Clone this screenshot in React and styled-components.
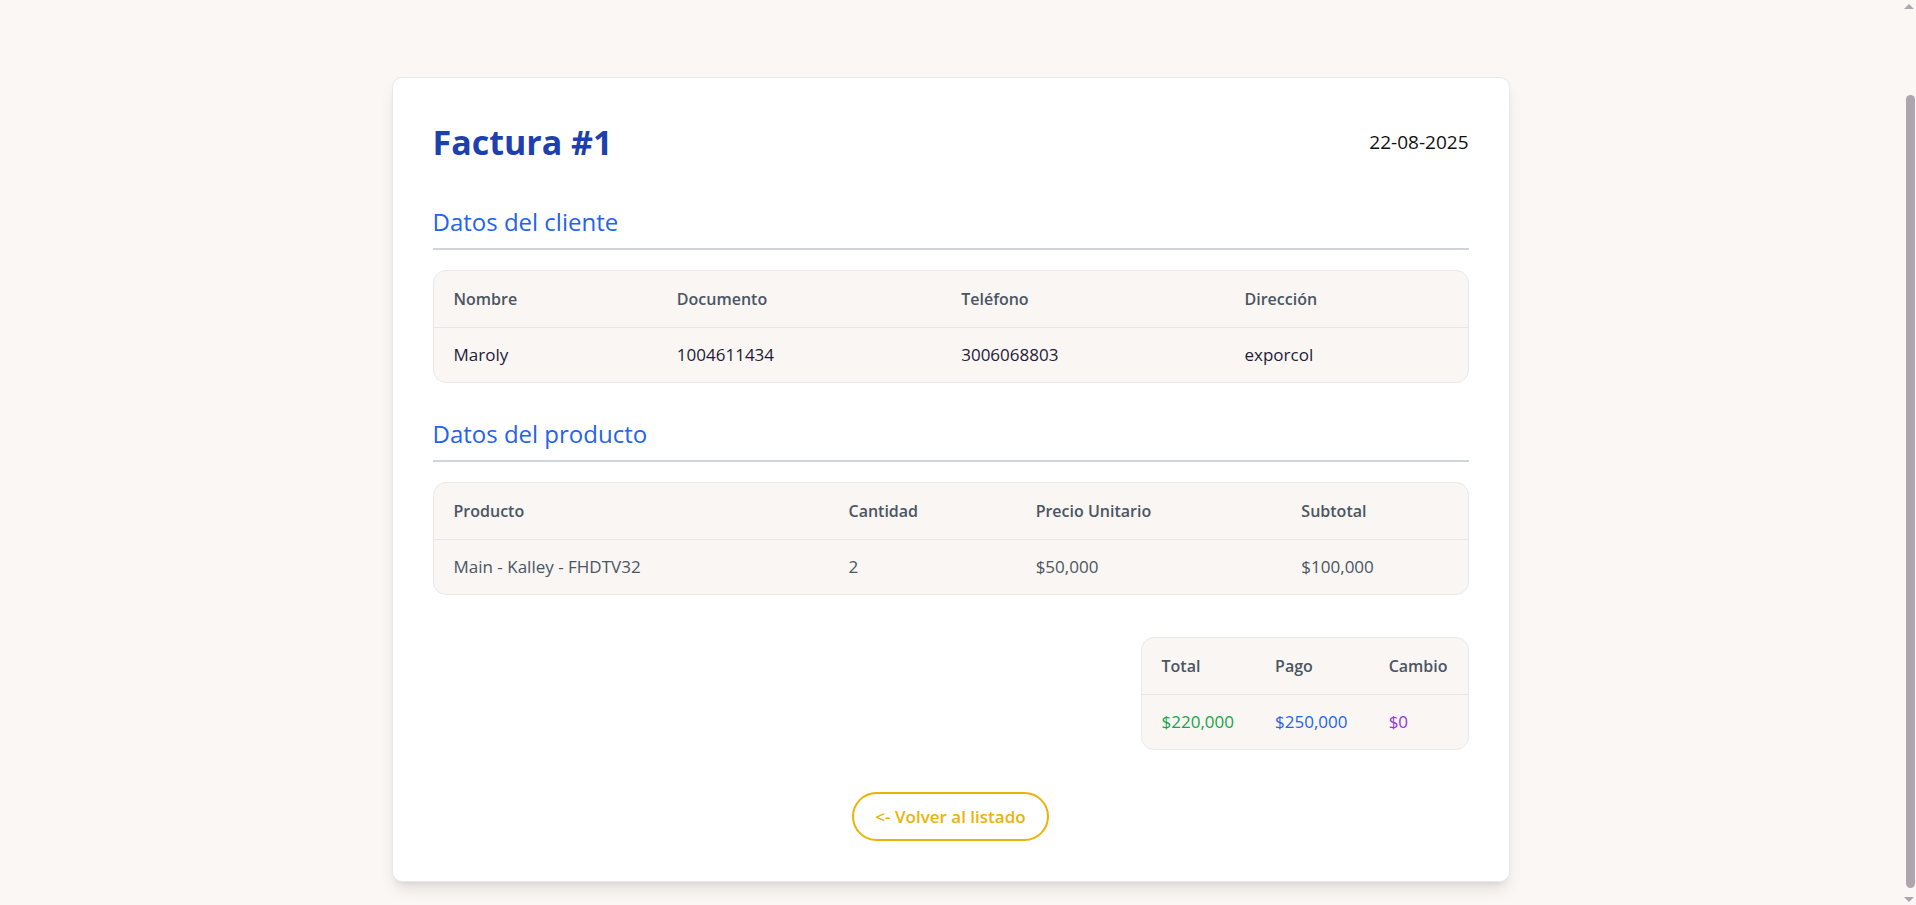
import { useLayoutEffect } from 'react'
import styled, { createGlobalStyle } from 'styled-components'

const GlobalStyle = createGlobalStyle`
    html, body {
        margin: 0;
        padding: 0;
        background: #faf7f4;
        font-family: "Open Sans", "Noto Sans", sans-serif;
        color: #111827;
    }
    ::-webkit-scrollbar {
        display: none;
    }
`

// imitation of the browser scrollbar seen in the capture
const ScrollBar = styled.div`
    position: fixed;
    top: 0;
    right: 0;
    width: 15px;
    height: 100vh;
    background: #faf7f4;
`

const ScrollThumb = styled.div`
    position: absolute;
    top: 95px;
    bottom: 17px;
    right: 1px;
    width: 9px;
    border-radius: 5px;
    background: #aea6ae;
`

const ScrollArrow = styled.div`
    position: absolute;
    left: 3px;
    ${p => (p.$down ? 'bottom: 3px;' : 'top: 4px;')}
    width: 0;
    height: 0;
    border-left: 5px solid transparent;
    border-right: 5px solid transparent;
    ${p => (p.$down ? 'border-top: 5px solid #aea6ae;' : 'border-bottom: 5px solid #aea6ae;')}
`

const Page = styled.div`
    padding: 121px 15px 30px 0;
`

const Card = styled.div`
    box-sizing: border-box;
    width: 1118px;
    margin: 0 auto;
    padding: 40px;
    background: #ffffff;
    border: 1px solid #ebe7eb;
    border-radius: 10px;
    box-shadow: 0 10px 15px -3px rgba(0, 0, 0, 0.1), 0 4px 6px -4px rgba(0, 0, 0, 0.1);
`

const Header = styled.div`
    display: flex;
    justify-content: space-between;
    align-items: center;
    height: 48px;
    margin-bottom: 40px;
`

const Title = styled.h1`
    margin: 0;
    font-size: 34px;
    line-height: 48px;
    font-weight: 700;
    color: #1e40af;
`

const DateText = styled.span`
    font-size: 19px;
    color: #111111;
`

const SectionTitle = styled.h2`
    margin: 0 0 20px;
    padding-bottom: 10px;
    border-bottom: 2px solid #d1d5db;
    font-size: 24px;
    line-height: 32px;
    font-weight: 500;
    color: #2563eb;
`

const Section = styled.section`
    margin-bottom: 35px;
`

const TableWrap = styled.div`
    display: ${p => (p.$inline ? 'inline-block' : 'block')};
    background: #f9f6f3;
    border: 1px solid #ece8ec;
    border-radius: 13px;
    overflow: hidden;
`

const Table = styled.table`
    width: ${p => p.$width || '100%'};
    border-collapse: collapse;
`

const Th = styled.th`
    width: ${p => p.$w || 'auto'};
    padding: 16px 20px;
    line-height: 24px;
    text-align: left;
    font-size: 16px;
    font-weight: 600;
    color: #4b5563;
    border-bottom: 1px solid #e9e5e9;
`

const Td = styled.td`
    padding: 15px 20px;
    line-height: 24px;
    text-align: left;
    font-size: 17px;
    font-weight: ${p => (p.$tone ? 500 : 400)};
    color: ${p => p.$color || '#1f1b3a'};
`

const TotalsRow = styled.div`
    display: flex;
    justify-content: flex-end;
    margin-top: 42px;
`

const Actions = styled.div`
    display: flex;
    justify-content: center;
    margin-top: 42px;
`

const BackButton = styled.button`
    padding: 11px 21px;
    background: transparent;
    border: 2px solid #eab308;
    border-radius: 999px;
    color: #eab308;
    font-family: inherit;
    font-size: 17px;
    line-height: 23px;
    font-weight: 600;
    cursor: pointer;
`

const cliente = {
    nombre: 'Maroly',
    documento: '1004611434',
    telefono: '3006068803',
    direccion: 'exporcol'
}

const productos = [
    { nombre: 'Main - Kalley - FHDTV32', cantidad: 2, precio: '$50,000', subtotal: '$100,000' }
]

const gray = '#4b5563'

const App = () => {

    useLayoutEffect(() => {
        window.scrollTo(0, 44)
    }, [])

    return (
        <Page>
            <GlobalStyle />
            <ScrollBar>
                <ScrollArrow />
                <ScrollThumb />
                <ScrollArrow $down />
            </ScrollBar>
            <Card>
                <Header>
                    <Title>Factura #1</Title>
                    <DateText>22-08-2025</DateText>
                </Header>

                <Section>
                    <SectionTitle>Datos del cliente</SectionTitle>
                    <TableWrap>
                        <Table>
                            <thead>
                                <tr>
                                    <Th $w='21.6%'>Nombre</Th>
                                    <Th $w='27.5%'>Documento</Th>
                                    <Th $w='27.4%'>Teléfono</Th>
                                    <Th>Dirección</Th>
                                </tr>
                            </thead>
                            <tbody>
                                <tr>
                                    <Td>{cliente.nombre}</Td>
                                    <Td>{cliente.documento}</Td>
                                    <Td>{cliente.telefono}</Td>
                                    <Td>{cliente.direccion}</Td>
                                </tr>
                            </tbody>
                        </Table>
                    </TableWrap>
                </Section>

                <section>
                    <SectionTitle>Datos del producto</SectionTitle>
                    <TableWrap>
                        <Table>
                            <thead>
                                <tr>
                                    <Th $w='38.2%'>Producto</Th>
                                    <Th $w='18.1%'>Cantidad</Th>
                                    <Th $w='25.7%'>Precio Unitario</Th>
                                    <Th>Subtotal</Th>
                                </tr>
                            </thead>
                            <tbody>
                                {productos.map(p => (
                                    <tr key={p.nombre}>
                                        <Td $tone $color={gray}>{p.nombre}</Td>
                                        <Td $tone $color={gray}>{p.cantidad}</Td>
                                        <Td $tone $color={gray}>{p.precio}</Td>
                                        <Td $tone $color={gray}>{p.subtotal}</Td>
                                    </tr>
                                ))}
                            </tbody>
                        </Table>
                    </TableWrap>
                </section>

                <TotalsRow>
                    <TableWrap $inline>
                        <Table $width='326px'>
                            <thead>
                                <tr>
                                    <Th $w='110px'>Total</Th>
                                    <Th $w='110px'>Pago</Th>
                                    <Th>Cambio</Th>
                                </tr>
                            </thead>
                            <tbody>
                                <tr>
                                    <Td $tone $color='#16a34a'>$220,000</Td>
                                    <Td $tone $color='#2563eb'>$250,000</Td>
                                    <Td $tone $color='#9333ea'>$0</Td>
                                </tr>
                            </tbody>
                        </Table>
                    </TableWrap>
                </TotalsRow>

                <Actions>
                    <BackButton>&lt;- Volver al listado</BackButton>
                </Actions>
            </Card>
        </Page>
    )
}

export default App
